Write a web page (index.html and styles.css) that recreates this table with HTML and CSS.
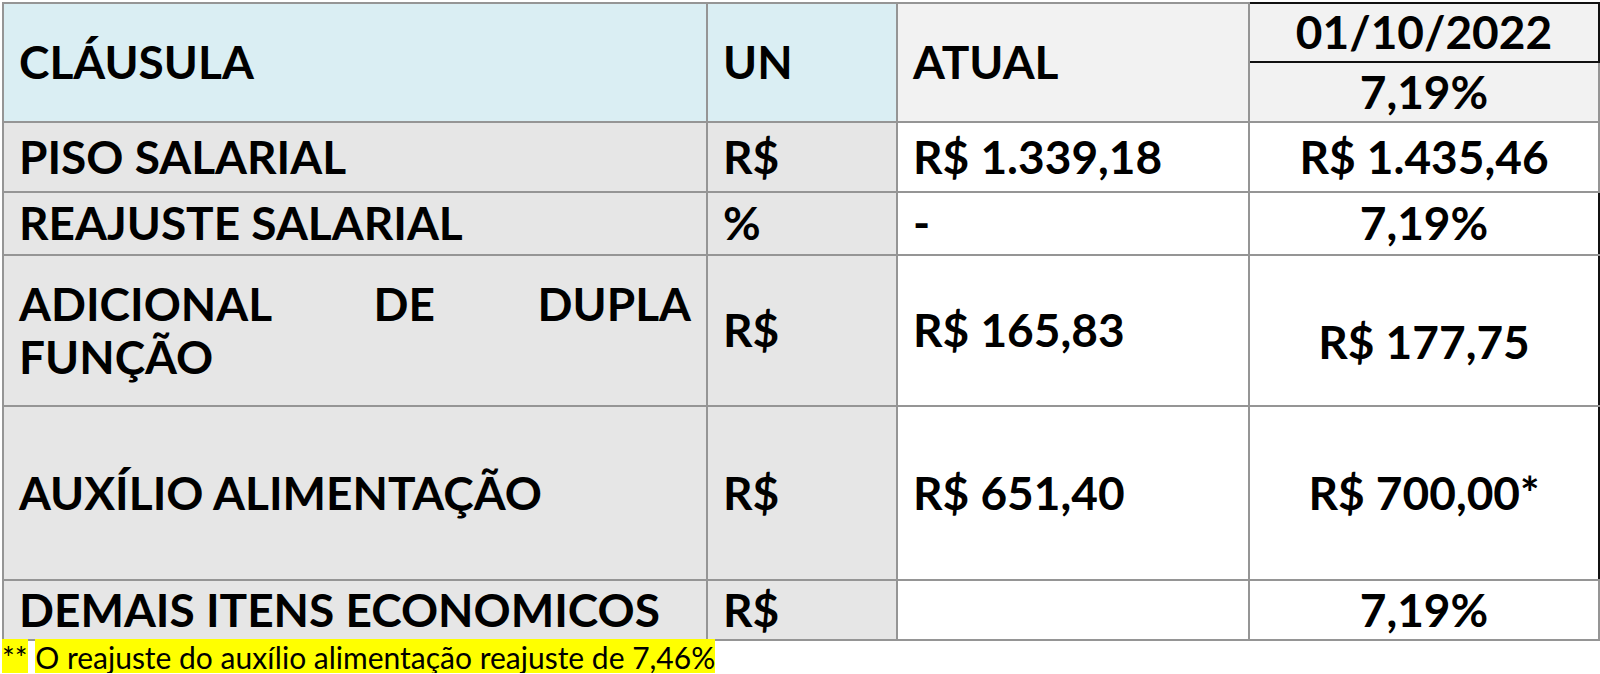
FILE: index.html
```html
<!DOCTYPE html>
<html lang="pt-BR">
<head>
<meta charset="utf-8">
<title>Cláusulas</title>
<link rel="stylesheet" href="styles.css">
</head>
<body>
<div class="page">
  <table class="grid">
    <colgroup>
      <col class="c1"><col class="c2"><col class="c3"><col class="c4">
    </colgroup>
    <thead>
      <tr class="h1">
        <th rowspan="2" class="blue left">CLÁUSULA</th>
        <th rowspan="2" class="blue left">UN</th>
        <th rowspan="2" class="light left">ATUAL</th>
        <th class="light center date">01/10/2022</th>
      </tr>
      <tr class="h2">
        <th class="light center">7,19%</th>
      </tr>
    </thead>
    <tbody>
      <tr class="r1">
        <td class="gray">PISO SALARIAL</td>
        <td class="gray">R$</td>
        <td>R$ 1.339,18</td>
        <td class="center">R$ 1.435,46</td>
      </tr>
      <tr class="r2">
        <td class="gray">REAJUSTE SALARIAL</td>
        <td class="gray">%</td>
        <td>-</td>
        <td class="center edge">7,19%</td>
      </tr>
      <tr class="r3">
        <td class="gray justify">ADICIONAL DE DUPLA FUNÇÃO</td>
        <td class="gray">R$</td>
        <td>R$ 165,83</td>
        <td class="center edge low">R$ 177,75</td>
      </tr>
      <tr class="r4">
        <td class="gray">AUXÍLIO ALIMENTAÇÃO</td>
        <td class="gray">R$</td>
        <td>R$ 651,40</td>
        <td class="center edge">R$ 700,00*</td>
      </tr>
      <tr class="r5">
        <td class="gray">DEMAIS ITENS ECONOMICOS</td>
        <td class="gray">R$</td>
        <td></td>
        <td class="center">7,19%</td>
      </tr>
    </tbody>
  </table>
  <p class="note"><span class="hl">**</span> <span class="hl">O reajuste do auxílio alimentação reajuste de 7,46%</span></p>
</div>
</body>
</html>
```
FILE: styles.css
```css
html, body {
  margin: 0;
  padding: 0;
  background: #ffffff;
}
.page {
  padding: 2px 0 0 2px;
  font-family: "Lato", "Liberation Sans", sans-serif;
  color: #000;
}
.grid {
  border-collapse: collapse;
  table-layout: fixed;
  width: 1596px;
}
.c1 { width: 704px; }
.c2 { width: 190px; }
.c3 { width: 352px; }
.c4 { width: 350px; }
.grid th,
.grid td {
  border: 2px solid #959595;
  font-size: 46px;
  font-weight: 700;
  line-height: 1.15;
  padding: 0 15px;
  vertical-align: middle;
  text-align: left;
  white-space: normal;
  background: #ffffff;
}
.grid th.blue { background: #daeef3; }
.grid th.light { background: #f2f2f2; }
.grid td.gray { background: #e6e6e6; }
.grid .center { text-align: center; }
.grid th.date { border: 2px solid #111111; }
.grid td.edge { border-right-color: #111111; }
.grid td.justify {
  text-align: justify;
  text-align-last: left;
}
.grid td.low { padding-top: 24px; }
.h1 { height: 59px; }
.h2 { height: 60px; }
.r1 { height: 70px; }
.r2 { height: 63px; }
.r3 { height: 151px; }
.r4 { height: 174px; }
.r5 { height: 60px; }
.note {
  margin: 0;
  font-size: 30px;
  font-weight: 400;
  line-height: 32px;
  white-space: nowrap;
}
.hl { background: #ffff00; }
```
